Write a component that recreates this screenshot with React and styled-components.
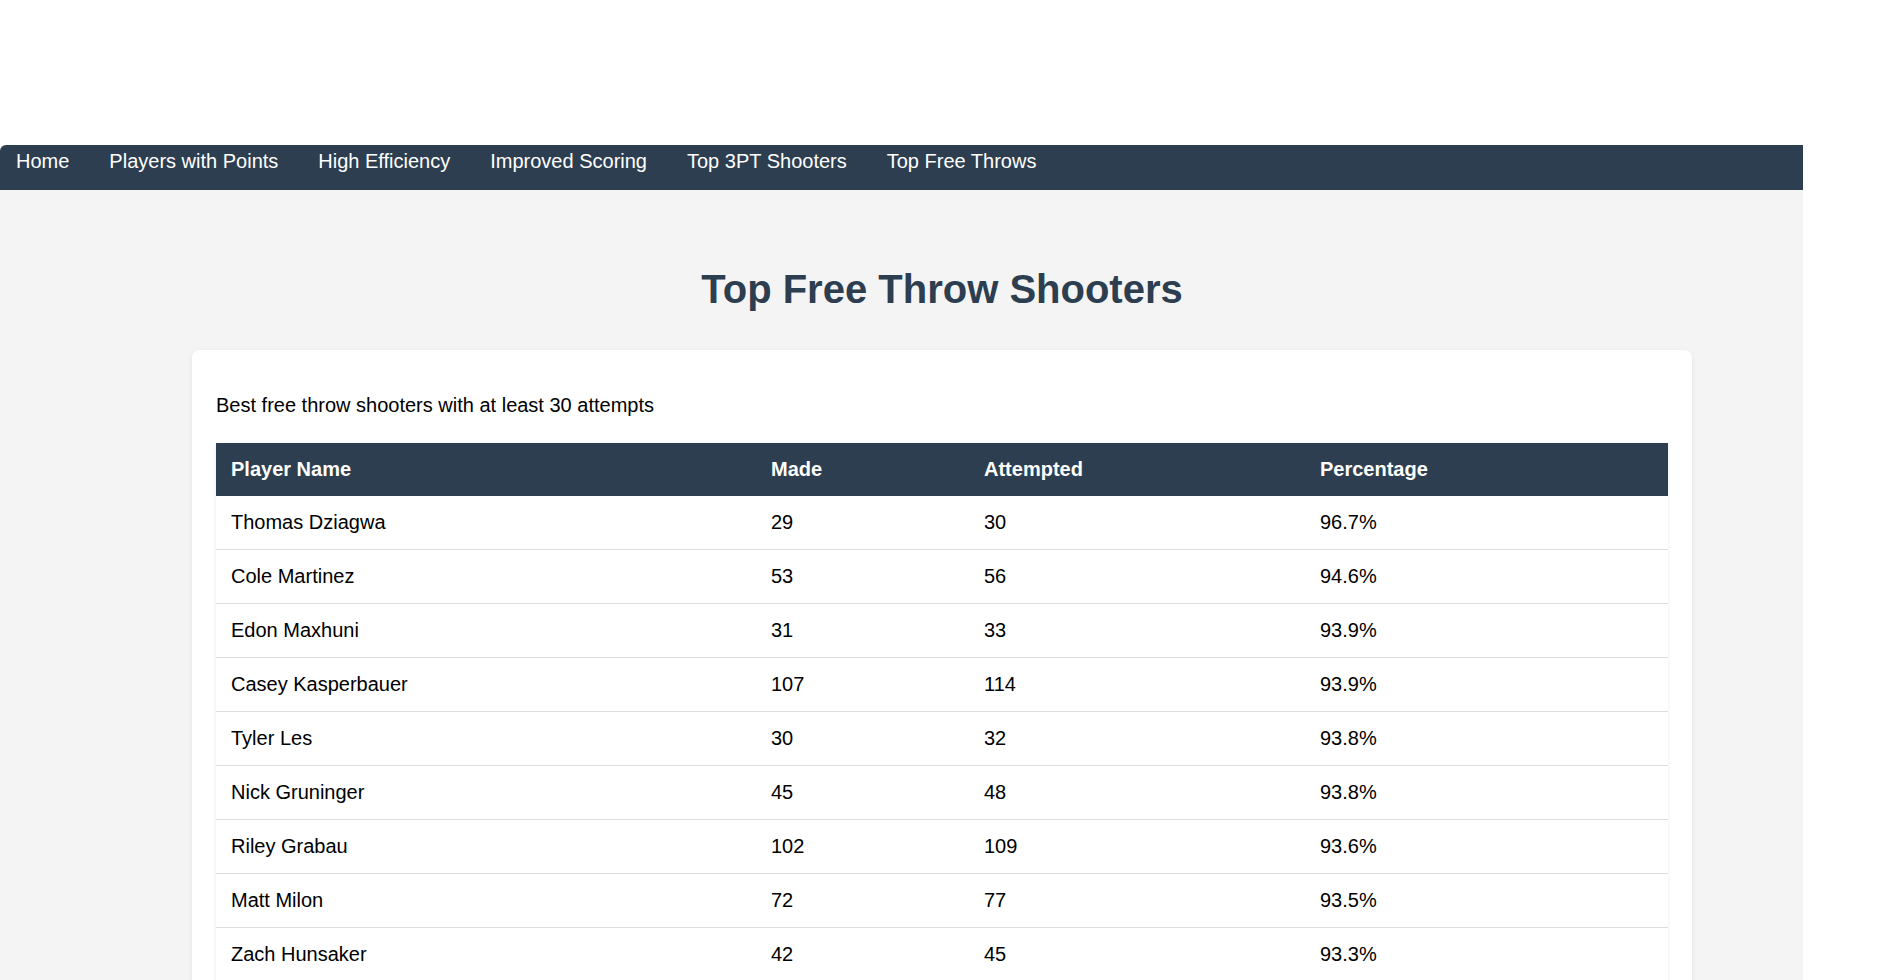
import styled, { createGlobalStyle } from 'styled-components';

const GlobalStyle = createGlobalStyle`
  html, body {
    margin: 0;
    padding: 0;
    background: #ffffff;
    font-family: 'Liberation Sans', Arial, sans-serif;
    overflow: hidden;
  }
`;

const links = [
  'Home',
  'Players with Points',
  'High Efficiency',
  'Improved Scoring',
  'Top 3PT Shooters',
  'Top Free Throws',
];

const players = [
  { name: 'Thomas Dziagwa', made: 29, att: 30, pct: '96.7%' },
  { name: 'Cole Martinez', made: 53, att: 56, pct: '94.6%' },
  { name: 'Edon Maxhuni', made: 31, att: 33, pct: '93.9%' },
  { name: 'Casey Kasperbauer', made: 107, att: 114, pct: '93.9%' },
  { name: 'Tyler Les', made: 30, att: 32, pct: '93.8%' },
  { name: 'Nick Gruninger', made: 45, att: 48, pct: '93.8%' },
  { name: 'Riley Grabau', made: 102, att: 109, pct: '93.6%' },
  { name: 'Matt Milon', made: 72, att: 77, pct: '93.5%' },
  { name: 'Zach Hunsaker', made: 42, att: 45, pct: '93.3%' },
];

const App = () => {
  return (
    <>
      <GlobalStyle />
      <Wrapper>
        <Navbar>
          {links.map((l) => (
            <NavLink key={l} href='#'>
              {l}
            </NavLink>
          ))}
        </Navbar>
        <Main>
          <Title>Top Free Throw Shooters</Title>
          <Card>
            <Subtitle>Best free throw shooters with at least 30 attempts</Subtitle>
            <Table>
              <colgroup>
                <col style={{ width: 540 }} />
                <col style={{ width: 213 }} />
                <col style={{ width: 336 }} />
                <col />
              </colgroup>
              <thead>
                <tr>
                  <Th>Player Name</Th>
                  <Th>Made</Th>
                  <Th>Attempted</Th>
                  <Th>Percentage</Th>
                </tr>
              </thead>
              <tbody>
                {players.map((p) => (
                  <Row key={p.name}>
                    <Td>{p.name}</Td>
                    <Td>{p.made}</Td>
                    <Td>{p.att}</Td>
                    <Td>{p.pct}</Td>
                  </Row>
                ))}
              </tbody>
            </Table>
          </Card>
        </Main>
      </Wrapper>
    </>
  );
};

const Wrapper = styled.div`
  width: 1803px;
  margin-top: 145px;
  min-height: 835px;
  display: flex;
  flex-direction: column;
`;

const Navbar = styled.nav`
  display: flex;
  gap: 40px;
  height: 45px;
  box-sizing: border-box;
  padding: 5px 16px 17px;
  background: #2c3e50;
  border-top-left-radius: 6px;
`;

const NavLink = styled.a`
  color: #ffffff;
  text-decoration: none;
  font-size: 20px;
  line-height: 23px;
`;

const Main = styled.main`
  flex: 1;
  background: #f4f4f4;
  padding: 0 111px 40px 192px;
`;

const Title = styled.h1`
  margin: 77px 0 38px;
  text-align: center;
  font-size: 40px;
  font-weight: bold;
  color: #2c3e50;
`;

const Card = styled.section`
  background: #ffffff;
  border-radius: 8px;
  box-shadow: 0 2px 5px rgba(0, 0, 0, 0.08);
  padding: 24px;
`;

const Subtitle = styled.p`
  margin: 20px 0 26px;
  font-size: 20px;
  line-height: 23px;
  color: #000000;
`;

const Table = styled.table`
  width: 100%;
  table-layout: fixed;
  border-collapse: collapse;
  box-shadow: 0 1px 3px rgba(0, 0, 0, 0.1);
`;

const Th = styled.th`
  background: #2c3e50;
  color: #ffffff;
  text-align: left;
  font-size: 20px;
  line-height: 23px;
  font-weight: bold;
  padding: 15px;
`;

const Row = styled.tr`
  border-bottom: 1px solid #dddddd;
`;

const Td = styled.td`
  font-size: 20px;
  line-height: 23px;
  color: #000000;
  padding: 15px;
`;

export default App;
